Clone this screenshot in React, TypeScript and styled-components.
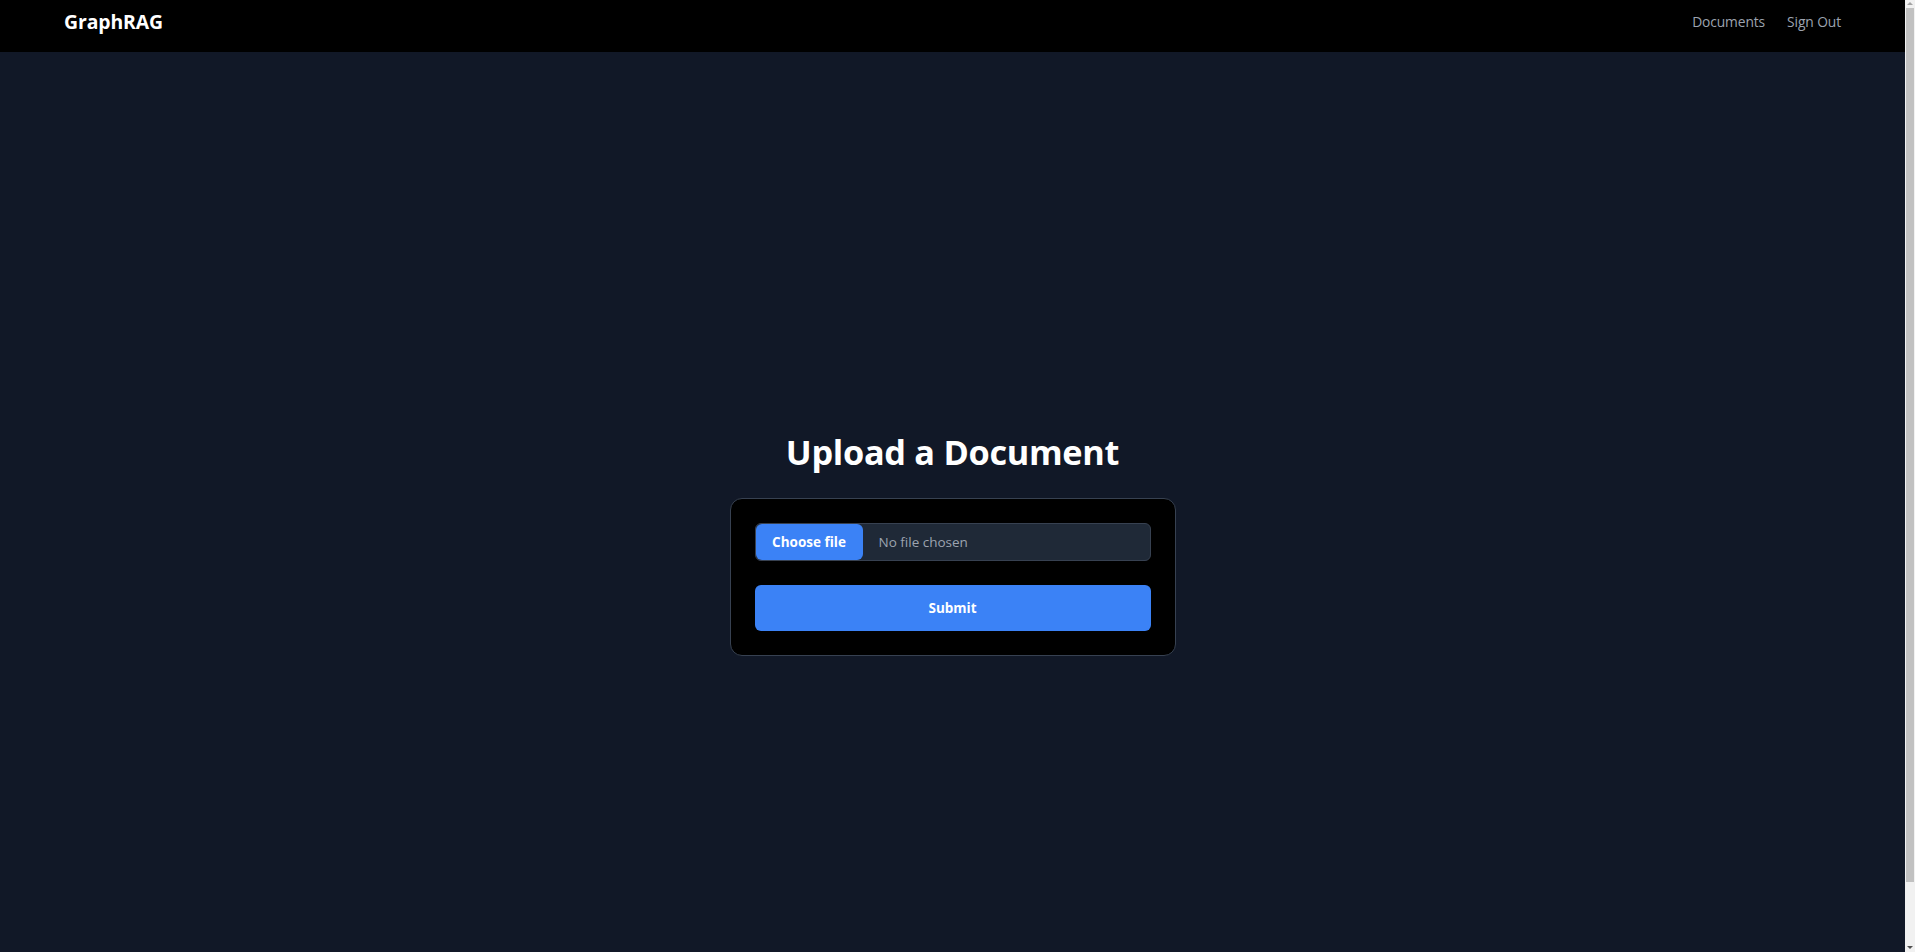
import React, { useState } from "react";
import styled, { createGlobalStyle } from "styled-components";

const GlobalStyle = createGlobalStyle`
  *, *::before, *::after { box-sizing: border-box; }
  html, body {
    margin: 0;
    padding: 0;
    background: #111827;
    font-family: "Open Sans", "Noto Sans", sans-serif;
    color: #ffffff;
  }
  body {
    padding-right: 10px;
  }
`;

/* Browser scrollbar as it appears in the screenshot (overlays the right edge) */
const ScrollTrack = styled.div`
  position: fixed;
  top: 0;
  right: 0;
  width: 10px;
  height: 100vh;
  background: #f1f1f1;
  z-index: 10;
`;

const ScrollThumb = styled.div`
  position: absolute;
  top: 8px;
  left: 1px;
  right: 1px;
  height: 874px;
  background: #c1c1c1;
`;

const ScrollArrow = styled.div<{ $down?: boolean }>`
  position: absolute;
  left: 2px;
  width: 0;
  height: 0;
  border-left: 3px solid transparent;
  border-right: 3px solid transparent;
  ${(p) =>
    p.$down
      ? "bottom: 3px; border-top: 3px solid #505050;"
      : "top: 2px; border-bottom: 3px solid #a3a3a3;"}
`;

const NavBar = styled.nav`
  height: 52px;
  background: #000000;
  display: flex;
  align-items: center;
  justify-content: space-between;
  padding: 0 64px 9px;
`;

const Brand = styled.a`
  font-size: 19.4px;
  font-weight: 700;
  color: #ffffff;
  text-decoration: none;
  letter-spacing: -0.1px;
`;

const NavLinks = styled.div`
  display: flex;
  align-items: center;
  gap: 22px;
`;

const NavLink = styled.a`
  font-size: 13.8px;
  font-weight: 500;
  color: #9ca3af;
  text-decoration: none;
  letter-spacing: -0.1px;
`;

const Main = styled.main`
  min-height: 100vh;
  padding-top: 32px;
  display: flex;
  flex-direction: column;
  align-items: center;
  justify-content: center;
`;

const Title = styled.h1`
  margin: 0 0 26px;
  font-size: 34.3px;
  line-height: 40px;
  font-weight: 700;
  color: #ffffff;
  letter-spacing: -0.3px;
`;

const Card = styled.div`
  width: 446px;
  background: #000000;
  border: 1px solid #374151;
  border-radius: 12px;
  padding: 24px;
`;

const Form = styled.form`
  display: flex;
  flex-direction: column;
  gap: 24px;
`;

const FilePicker = styled.label`
  display: flex;
  align-items: center;
  width: 100%;
  height: 38px;
  background: #1f2937;
  border: 1px solid #374151;
  border-radius: 6px;
  cursor: pointer;
`;

const HiddenInput = styled.input`
  position: absolute;
  width: 1px;
  height: 1px;
  opacity: 0;
  overflow: hidden;
`;

const PickButton = styled.span`
  display: flex;
  align-items: center;
  height: 36px;
  width: 107px;
  justify-content: center;
  border-radius: 6px;
  background: #3b82f6;
  color: #ffffff;
  font-size: 13.5px;
  font-weight: 700;
`;

const FileName = styled.span`
  margin-left: 16px;
  color: #9ca3af;
  font-size: 13.5px;
`;

const SubmitButton = styled.button`
  height: 46px;
  width: 100%;
  border: 0;
  border-radius: 6px;
  background: #3b82f6;
  color: #ffffff;
  font-family: "Open Sans", "Noto Sans", sans-serif;
  font-size: 13.5px;
  font-weight: 700;
  cursor: pointer;
`;

export default function App() {
  const [name, setName] = useState<string>("");
  return (
    <>
      <GlobalStyle />
      <NavBar>
        <Brand href="#">GraphRAG</Brand>
        <NavLinks>
          <NavLink href="#">Documents</NavLink>
          <NavLink href="#">Sign Out</NavLink>
        </NavLinks>
      </NavBar>
      <Main>
        <Title>Upload a Document</Title>
        <Card>
          <Form onSubmit={(e) => e.preventDefault()}>
            <FilePicker>
              <HiddenInput
                type="file"
                onChange={(e) => setName(e.target.files?.[0]?.name ?? "")}
              />
              <PickButton>Choose file</PickButton>
              <FileName>{name || "No file chosen"}</FileName>
            </FilePicker>
            <SubmitButton type="submit">Submit</SubmitButton>
          </Form>
        </Card>
      </Main>
      <ScrollTrack aria-hidden="true">
        <ScrollArrow />
        <ScrollThumb />
        <ScrollArrow $down />
      </ScrollTrack>
    </>
  );
}
